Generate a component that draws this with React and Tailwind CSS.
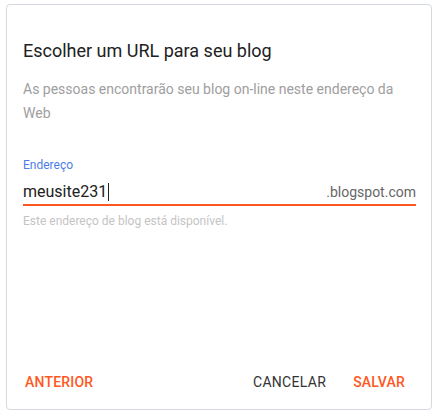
export default function App() {
  return (
    <div className="w-[443px] h-[415px] bg-white pt-[4px] pl-[6px]" style={{ fontFamily: "Roboto, 'Liberation Sans', sans-serif" }}>
      <div className="w-[426px] h-[406px] border border-[#d3d9de] rounded-[4px] flex flex-col pl-[16px] pr-[15px] box-border">
        <div className="mt-[34px] text-[18px] leading-[24px] text-[#212121]">Escolher um URL para seu blog</div>
        <div className="mt-[14px] text-[14px] leading-[24px] text-[#9e9e9e] pr-[20px]">
          As pessoas encontrarão seu blog on-line neste endereço da Web
        </div>
        <div className="mt-[32px] text-[12px] leading-[16px] text-[#4a7ee8]">Endereço</div>
        <div className="mt-[7px] flex items-baseline justify-between border-b-2 border-[#ff5722] h-[26px]">
          <div className="flex items-center text-[16px] leading-[24px] text-[#212121]">
            meusite231<span className="inline-block w-[1px] h-[18px] bg-[#212121] ml-[1px]"></span>
          </div>
          <div className="text-[14px] leading-[24px] text-[#666666]">.blogspot.com</div>
        </div>
        <div className="mt-[7px] text-[12px] leading-[16px] text-[#c4c4c4]">Este endereço de blog está disponível.</div>
        <div className="mt-auto mb-[17px] flex items-center text-[14px] leading-[20px]">
          <div className="ml-[2px] text-[#ff5722] font-medium tracking-[0.2px]">ANTERIOR</div>
          <div className="ml-auto text-[#333333] tracking-[0.3px]">CANCELAR</div>
          <div className="ml-[27px] mr-[11px] text-[#ff5722] font-medium tracking-[0.2px]">SALVAR</div>
        </div>
      </div>
    </div>
  );
}
